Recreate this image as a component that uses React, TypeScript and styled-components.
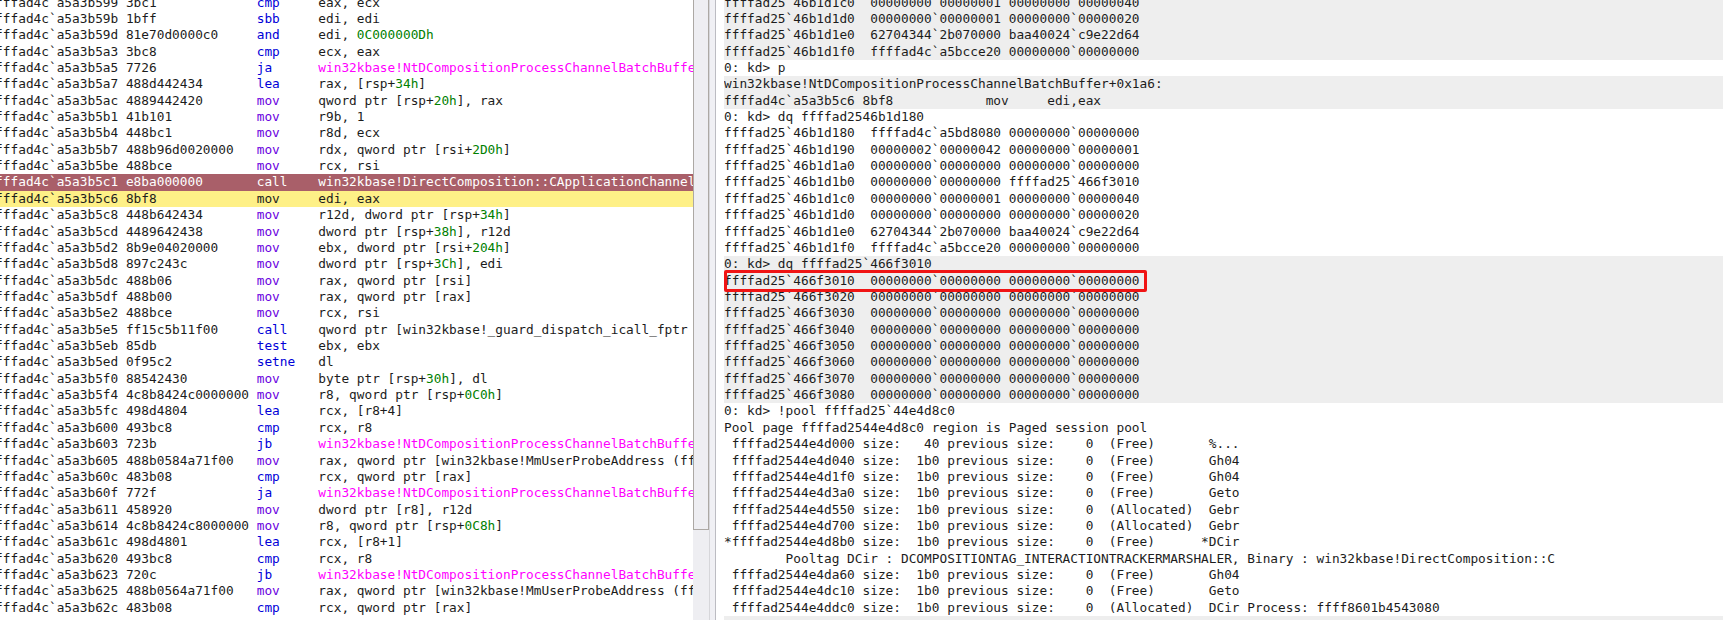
import React from "react";
import styled, { createGlobalStyle } from "styled-components";

const Global = createGlobalStyle`
  html, body { margin: 0; padding: 0; background: #fff; overflow: hidden; }
`;

const Page = styled.div`
  display: flex;
  width: 1723px;
  height: 620px;
  overflow: hidden;
  font-family: "DejaVu Sans Mono", "Liberation Mono", monospace;
  font-size: 12.79px;
  color: #1c1c1c;
`;

const DisasmPane = styled.div`
  width: 693px;
  flex: none;
  overflow: hidden;
`;

const Rows = styled.div<{ $indent?: number }>`
  margin-top: -5.5px;
  margin-left: ${(p) => p.$indent ?? 0}px;
`;

const Row = styled.div<{ $bg?: string; $fg?: string }>`
  height: 16.37px;
  line-height: 16.37px;
  white-space: pre;
  background: ${(p) => p.$bg ?? "transparent"};
  color: ${(p) => p.$fg ?? "inherit"};
  position: relative;
`;

const ScrollTrack = styled.div`
  width: 17px;
  flex: none;
  background: #eeeef2;
  box-sizing: border-box;
  border-right: 1px solid #d6d6da;
`;

const ScrollThumb = styled.div`
  height: 530px;
  width: 16px;
  background: #eeeef2;
  box-sizing: border-box;
  border: 1px solid #aca8a4;
  border-top: 0;
`;

const Splitter = styled.div`
  width: 6px;
  flex: none;
  background: #f0f0f4;
  box-sizing: border-box;
  border-right: 1px solid #bcbcc2;
`;

const Gutter = styled.div`
  width: 8px;
  flex: none;
  background: #fff;
`;

const CommandPane = styled.div`
  flex: 1;
  min-width: 0;
  overflow: hidden;
`;

const Highlight = styled.div`
  position: absolute;
  z-index: 1;
  left: 0;
  top: -3px;
  width: 423px;
  height: 22px;
  box-sizing: border-box;
  border: 3px solid #f01414;
  border-radius: 2px;
`;

const Mnemonic = styled.span<{ $kind: "mov" | "op" }>`
  color: ${(p) => (p.$kind === "mov" ? "#6a00e0" : "#0000d8")};
`;

const Num = styled.span`
  color: #008000;
`;

const Target = styled.span`
  color: #ff00ff;
`;

const Plain = styled.span<{ $c?: string }>`
  color: ${(p) => p.$c ?? "inherit"};
`;

type Dis = [string, string, string, string];
const J = "win32kbase!NtDCompositionProcessChannelBatchBuffer+0x1a6";

const dis: Dis[] = [
  ["599", "3bc1", "cmp", "eax, ecx"],
  ["59b", "1bff", "sbb", "edi, edi"],
  ["59d", "81e70d0000c0", "and", "edi, {0C000000Dh}"],
  ["5a3", "3bc8", "cmp", "ecx, eax"],
  ["5a5", "7726", "ja", "@"],
  ["5a7", "488d442434", "lea", "rax, [rsp+{34h}]"],
  ["5ac", "4889442420", "mov", "qword ptr [rsp+{20h}], rax"],
  ["5b1", "41b101", "mov", "r9b, 1"],
  ["5b4", "448bc1", "mov", "r8d, ecx"],
  ["5b7", "488b96d0020000", "mov", "rdx, qword ptr [rsi+{2D0h}]"],
  ["5be", "488bce", "mov", "rcx, rsi"],
  ["5c1", "e8ba000000", "call", "win32kbase!DirectComposition::CApplicationChannel::ProcessCommandBufferIterator"],
  ["5c6", "8bf8", "mov", "edi, eax"],
  ["5c8", "448b642434", "mov", "r12d, dword ptr [rsp+{34h}]"],
  ["5cd", "4489642438", "mov", "dword ptr [rsp+{38h}], r12d"],
  ["5d2", "8b9e04020000", "mov", "ebx, dword ptr [rsi+{204h}]"],
  ["5d8", "897c243c", "mov", "dword ptr [rsp+{3Ch}], edi"],
  ["5dc", "488b06", "mov", "rax, qword ptr [rsi]"],
  ["5df", "488b00", "mov", "rax, qword ptr [rax]"],
  ["5e2", "488bce", "mov", "rcx, rsi"],
  ["5e5", "ff15c5b11f00", "call", "qword ptr [win32kbase!_guard_dispatch_icall_fptr"],
  ["5eb", "85db", "test", "ebx, ebx"],
  ["5ed", "0f95c2", "setne", "dl"],
  ["5f0", "88542430", "mov", "byte ptr [rsp+{30h}], dl"],
  ["5f4", "4c8b8424c0000000", "mov", "r8, qword ptr [rsp+{0C0h}]"],
  ["5fc", "498d4804", "lea", "rcx, [r8+4]"],
  ["600", "493bc8", "cmp", "rcx, r8"],
  ["603", "723b", "jb", "@"],
  ["605", "488b0584a71f00", "mov", "rax, qword ptr [win32kbase!MmUserProbeAddress (ffffad4c`a5c2a0f0)]"],
  ["60c", "483b08", "cmp", "rcx, qword ptr [rax]"],
  ["60f", "772f", "ja", "@"],
  ["611", "458920", "mov", "dword ptr [r8], r12d"],
  ["614", "4c8b8424c8000000", "mov", "r8, qword ptr [rsp+{0C8h}]"],
  ["61c", "498d4801", "lea", "rcx, [r8+1]"],
  ["620", "493bc8", "cmp", "rcx, r8"],
  ["623", "720c", "jb", "@"],
  ["625", "488b0564a71f00", "mov", "rax, qword ptr [win32kbase!MmUserProbeAddress (ffffad4c`a5c2a0f0)]"],
  ["62c", "483b08", "cmp", "rcx, qword ptr [rax]"],
];

function Operand({ text, plain }: { text: string; plain: boolean }) {
  if (text === "@") return <Target>{J}</Target>;
  if (plain) return <>{text.replace(/[{}]/g, "")}</>;
  const parts = text.split(/(\{[^}]*\})/);
  return (
    <>
      {parts.map((p, i) =>
        p.startsWith("{") ? <Num key={i}>{p.slice(1, -1)}</Num> : <span key={i}>{p}</span>
      )}
    </>
  );
}

function DisRow({ d }: { d: Dis }) {
  const [a, b, m, o] = d;
  const sel = a === "5c1";
  const cur = a === "5c6";
  const prefix = `ffffad4c\`a5a3b${a} ${b.padEnd(16, " ")} `;
  const mn = m.padEnd(8, " ");
  return (
    <Row $bg={sel ? "#a95f69" : cur ? "#fef087" : undefined} $fg={sel ? "#fff" : undefined}>
      {prefix}
      {sel || cur ? <Plain>{mn}</Plain> : <Mnemonic $kind={m === "mov" ? "mov" : "op"}>{mn}</Mnemonic>}
      <Operand text={o} plain={sel || cur} />
    </Row>
  );
}

const dump = (addr: string, a: string, b: string, c: string, d: string) =>
  `ffffad25\`${addr}  ${a}\`${b} ${c}\`${d}`;
const Z = "00000000";
const pool = (lead: string, tail: string, size: string, state: string, tag: string) =>
  `${lead}ffffad2544e4${tail} size:  ${size.padStart(3, " ")} previous size:    0  ${state.padEnd(13, " ")}${tag}`;

const G = "#eeeeee";
const cmd: { t: string; bg?: string; box?: boolean }[] = [
  { t: dump("46b1d1c0", Z, "00000001", Z, "00000040"), bg: G },
  { t: dump("46b1d1d0", Z, "00000001", Z, "00000020"), bg: G },
  { t: dump("46b1d1e0", "62704344", "2b070000", "baa40024", "c9e22d64"), bg: G },
  { t: dump("46b1d1f0", "ffffad4c", "a5bcce20", Z, Z), bg: G },
  { t: "0: kd> p" },
  { t: "win32kbase!NtDCompositionProcessChannelBatchBuffer+0x1a6:", bg: G },
  { t: "ffffad4c`a5a3b5c6 8bf8            mov     edi,eax", bg: G },
  { t: "0: kd> dq ffffad2546b1d180" },
  { t: dump("46b1d180", "ffffad4c", "a5bd8080", Z, Z) },
  { t: dump("46b1d190", "00000002", "00000042", Z, "00000001") },
  { t: dump("46b1d1a0", Z, Z, Z, Z) },
  { t: dump("46b1d1b0", Z, Z, "ffffad25", "466f3010") },
  { t: dump("46b1d1c0", Z, "00000001", Z, "00000040") },
  { t: dump("46b1d1d0", Z, Z, Z, "00000020") },
  { t: dump("46b1d1e0", "62704344", "2b070000", "baa40024", "c9e22d64") },
  { t: dump("46b1d1f0", "ffffad4c", "a5bcce20", Z, Z) },
  { t: "0: kd> dq ffffad25`466f3010", bg: G },
  { t: dump("466f3010", Z, Z, Z, Z), bg: G, box: true },
  ...["3020", "3030", "3040", "3050", "3060", "3070", "3080"].map((s) => ({
    t: dump(`466f${s}`, Z, Z, Z, Z),
    bg: G,
  })),
  { t: "0: kd> !pool ffffad25`44e4d8c0" },
  { t: "Pool page ffffad2544e4d8c0 region is Paged session pool" },
  { t: pool(" ", "d000", "40", "(Free)", "%...") },
  { t: pool(" ", "d040", "1b0", "(Free)", "Gh04") },
  { t: pool(" ", "d1f0", "1b0", "(Free)", "Gh04") },
  { t: pool(" ", "d3a0", "1b0", "(Free)", "Geto") },
  { t: pool(" ", "d550", "1b0", "(Allocated)", "Gebr") },
  { t: pool(" ", "d700", "1b0", "(Allocated)", "Gebr") },
  { t: `*ffffad2544e4d8b0 size:  1b0 previous size:    0  (Free)      *DCir` },
  { t: "        Pooltag DCir : DCOMPOSITIONTAG_INTERACTIONTRACKERMARSHALER, Binary : win32kbase!DirectComposition::C" },
  { t: pool(" ", "da60", "1b0", "(Free)", "Gh04") },
  { t: pool(" ", "dc10", "1b0", "(Free)", "Geto") },
  { t: pool(" ", "ddc0", "1b0", "(Allocated)", "DCir Process: ffff8601b4543080") },
  { t: " ", bg: G },
];

export default function App() {
  return (
    <Page>
      <Global />
      <DisasmPane>
        <Rows $indent={-12.6}>
          {dis.map((d) => (
            <DisRow key={d[0]} d={d} />
          ))}
        </Rows>
      </DisasmPane>
      <ScrollTrack>
        <ScrollThumb />
      </ScrollTrack>
      <Splitter />
      <Gutter />
      <CommandPane>
        <Rows>
          {cmd.map((r, i) => (
            <Row key={i} $bg={r.bg}>
              {r.t}
              {r.box ? <Highlight /> : null}
            </Row>
          ))}
        </Rows>
      </CommandPane>
    </Page>
  );
}
